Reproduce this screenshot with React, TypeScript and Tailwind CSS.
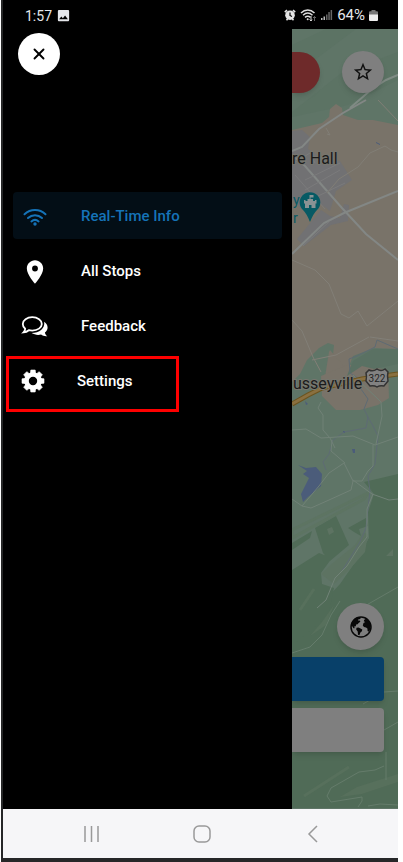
"use client";

import React from 'react';
import { X } from 'lucide-react';
import { MdImage, MdLocationOn, MdStarBorder } from 'react-icons/md';

function WifiIcon() {
  return (
    <svg viewBox="0 0 24 18" width={24} height={18} fill="none" stroke="currentColor" strokeWidth="2" strokeLinecap="round">
      <path d="M1.500 6.200c6-5.600 15-5.600 21 0M5 10c4-3.800 10-3.800 14 0M8.400 13.400c2.200-1.900 5-1.900 7.200 0" />
      <circle cx="12" cy="16" r="1.700" fill="currentColor" stroke="none" />
    </svg>
  );
}

function FeedbackIcon() {
  return (
    <svg viewBox="0 0 28 24" width={28} height={24}>
      <path d="M23.200 6.800c2 1.400 3.400 3.400 3.400 5.700 0 2-1 3.700-2.700 5 .2 1.600 1 2.700 2.400 3.700-2.500.3-4.700-.4-6.200-1.600-3.400.7-6.700.2-9.500-1.500 7.700 0 13.500-4.500 12.600-11.300z" fill="#fff" />
      <path d="M11.300 2.200c5.300 0 9.500 3 9.500 6.700s-4.200 6.700-9.500 6.700c-1.300 0-2.400-.1-3.500-.4-1.500 1.300-3.200 2-5.300 2.200 1-1 1.600-2.200 1.700-3.600-1.500-1.200-2.400-3-2.400-4.900 0-3.700 4.200-6.700 9.500-6.700z" fill="#000" stroke="#fff" strokeWidth="1.800" />
    </svg>
  );
}

function GearIcon() {
  const teeth = [0, 45, 90, 135, 180, 225, 270, 315];

  return (
    <svg viewBox="0 0 24 24" width={24} height={24}>
      <circle cx="12" cy="12" r="6.500" fill="none" stroke="#fff" strokeWidth="4.600" />
      {teeth.map((angle) => (
        <path key={angle} d="M9.300 5l.5-4h4.400l.5 4z" fill="#fff" stroke="#fff" strokeWidth=".6" strokeLinejoin="round" transform={`rotate(${angle} 12 12)`} />
      ))}
    </svg>
  );
}

function AlarmIcon() {
  return (
    <svg viewBox="0 0 12 12" width={12} height={12}>
      <path d="M.8 3.200L3 1.200M11.200 3.200L9 1.200M2.500 11.200l1.500-1.700M9.500 11.200L8 9.500" stroke="#e5e5e5" strokeWidth="1.600" />
      <circle cx="6" cy="6.200" r="4.800" fill="#e5e5e5" />
      <path d="M6 3.500v3l2 1" fill="none" stroke="#000" strokeWidth="1.200" />
    </svg>
  );
}

function WifiStatusIcon() {
  return (
    <svg viewBox="0 0 17 14" width={17} height={14} fill="none" stroke="#ddd" strokeWidth="1.500">
      <path d="M1 5c4-4 9.500-4 13.500 0M3 7.300c3-2.800 6.500-2.800 9.500 0M5 9.400c2-1.600 3.500-1.600 5.500 0" />
      <circle cx="7.700" cy="11.200" r="1" fill="#ddd" stroke="none" />
      <path d="M11 8v5M9.500 11.500l1.500 1.500 1-1.500" strokeWidth="1" />
      <path d="M14.500 13V8.500M13 10l1.500-1.500L16 10" stroke="#666" strokeWidth="1" />
    </svg>
  );
}

function SignalIcon() {
  return (
    <svg viewBox="0 0 12 12" width={12} height={12}>
      <path d="M0 9h1.500v2H0zM2.500 7.500H4V11H2.500z" fill="#bbb" />
      <path d="M5 5.500h1.500V11H5zM7.300 3h1.500v8H7.300zM9.600 1h1.500v10H9.600z" fill="#666" />
    </svg>
  );
}

function BatteryIcon() {
  return (
    <svg viewBox="0 0 9 11" width={9} height={11}>
      <path d="M2.500 0h4v1.200H8a1 1 0 0 1 1 1V5H0V2.200a1 1 0 0 1 1-1h1.500z" fill="#777" />
      <path d="M0 4.500h9V10a1 1 0 0 1-1 1H1a1 1 0 0 1-1-1z" fill="#eee" />
    </svg>
  );
}

function GlobeIcon() {
  return (
    <svg viewBox="0 0 22 22" width={22} height={22}>
      <circle cx="11" cy="11" r="10" fill="none" stroke="#080808" strokeWidth="1.500" />
      <path d="M1 9c.5-3.500 3-6.500 6-7.500l3-.5 1 1-1.500 1.300-1.500.2.500 1.200 1.500-.2.300 1.200-1.700 1.200-1 1.400-1.500.3-.3 1.600-1.500.2L4 11.200l1.500.8L3.500 12.200 2 10z" fill="#080808" />
      <path d="M6.500 11.800l2-.3 1.500.7 2.300 1.200-.4 1.900-1.500 1.300-1 2.700-1.400-.5-.3-3.400-1.500-1.800z" fill="#080808" />
      <path d="M14.500 2l2.500.8 2.500 3 1.300 4-.6 3.700-1.200 2.300-1.400-.8-.2-2.500-1.400-1-2-.4-1.200-1.600.7-2.500 1.800-1-1.500-.8.400-1.500 1.200-.5z" fill="#080808" />
    </svg>
  );
}

function CountyMap() {
  return (
    <svg className="absolute inset-0 h-full w-full" viewBox="292 29 106 780" preserveAspectRatio="xMinYMin slice" fontFamily="Roboto, sans-serif">
      <rect x="292" y="29" width="300" height="900" fill="#5f7567" />
      <path d="M292 45l34-16h30l-64 48zM292 112l48-38 58-22v28l-50 25-56 12z" fill="#5a7163" opacity=".6" />

      {/* built-up land */}
      <path d="M292 130l30-7 7-6 1-8 6-5 6 4 1 7 15 5h15l25 5v224l-24-1-21 8-5 13-12 10-9-9 6-15 1-10-6-2-9 5-12 12-7 14-8 8z" fill="#797369" />
      <path d="M330 350l17 20-13 12-9-5 4-25z" fill="#797369" />
      <path d="M321 376l26-11h15l26 5 1 28-11 7-18 5h-24l-14-14z" fill="#797369" />
      <path d="M292 131l10-1 8 7-2 12 17 11 15 1 12 19-16 11-6 20-13-10-14 9-11-10z" fill="#717173" />
      <path d="M321 210l9 6 10 2 4-14 5 1-1 16-17 4-18 14-9 7-7-7z" fill="#717173" />

      {/* woods */}
      <path d="M398 474l-34 8 10 12-6 18 1 26-13 23-16 23-13 14-9 21-26 14v175h406V474z" fill="#506b57" />
      <path d="M292 543l20-12-2 7-18 12zM315 528l21-12 13 29-19 16-7-8zM292 570l27-17 13 5-11 15 1 11 12 4-6 28-36 30zM348 528l18-10 2 8-9 3 2 7-7-4z" fill="#506b57" />
      <path d="M321 574l13-12 21-17 8-12 5 1-3 18-17 19-14 13z" fill="#5d7362" />
      <path d="M327 529l5-2 2 5-5 3zM386 556l7-7v7z" fill="#5d7362" />
      <path d="M292 530l76-37-4 6-72 39zM300 610l14-21M296 700l30-32M304 796l45-29M345 700l20-14" fill="none" stroke="#5b735f" strokeWidth="3" opacity=".6" />
      <path d="M340 797l17-10 41-13v8l-36 12zM310 636l12-14 12-17-8 20z" fill="#5c735f" opacity=".6" />

      {/* water */}
      <path d="M298 465l8 3 10-1 6 7-1 12-8 7-5 4-5 5-2-8 5-10 3-6-6-4 4-3z" fill="#4b5c7a" />
      <path d="M376 142l4 2v1l-4-2zM305 401l3 3-2 1zM352 449h3v4h-2zM343 431h2v2h-2z" fill="#4b5c7a" />
      <path d="M347 376l3-8 3-7 20-12h25v15l-24 5-12-3z" fill="#5a7163" />
      <path d="M398 349l-21-9-2 7-18 9-8 3 1 14 9 6 2 10 7 10-4 10 4 8-2 11-22 4-11 8-4 14-6 8 3 8M367 416l5 8 6 12-3 28-7 12 2 15-2 17-2 20-6 14-18 29" fill="none" stroke="#5e6b74" strokeWidth="1" />

      {/* roads */}
      <g fill="none" stroke="#838785">
        <path d="M366 100l-23 13-24 16-17 18-10 4M292 155l13 11 37 42 24 26 32 26M292 254l32-31 20-10 54-22" strokeWidth="2" />
        <path d="M292 164l18-11 5 10M295 175l30 34M305 180l35-17M305 190l35-20M314 198l31-15M303 246l27-25" stroke="#7b7b7c" strokeWidth="1" />
        <path d="M326 128l4 7-3-1M398 152l-7-2-6-4-15 7-12 14-19 12-12 14M378 100l20 21" stroke="#817e76" strokeWidth="1" />
        <path d="M292 260l23 10 14 14 12 30 8 4 9-7 9 15 31-25M370 337l28 4M369 337l-33 18-24 5M292 320l10 11 11 26 8 15" stroke="#827f77" strokeWidth="1" />
        <path d="M321 402l-3 6 5 7v15l7 8 5 10M292 430l14-1 15 9 32-2 22 9 23-8M353 375l28 27 1 14-6 28" stroke="#718277" strokeWidth="1" />
        <path d="M292 499l10 7 17-20 10-13 15-10 9 18h9l6-10 5-5V445M302 506l9 2 18-8 22-10 2-9M353 480l19 14 17 6 9-1M373 494l-6 15v28l-8 10-12 19-12 12-9 22-9 8M345 463l-14-12 1-11" stroke="#718277" strokeWidth="1" />
        <path d="M292 653l18-6 12-12 9-20 9-14M350 615l20-12 28-16M363 704l21-12 14-1M384 730l14-8M386 752v28M384 766l-9 4-16 2-28 16-4 8 4 6 31-5v4l-4 6M368 806l12-2 18 1" stroke="#657c6b" strokeWidth="1" />
        <path d="M350 108l22-19 14-9 14-6" stroke="#7f8b84" strokeWidth="2" />
      </g>
      <path d="M292 404l16-9 14-7 40-9 36-5" fill="none" stroke="#6c541f" strokeWidth="5" />
      <path d="M292 404l16-9 14-7 40-9 36-5" fill="none" stroke="#8a7040" strokeWidth="3" />

      {/* route shield */}
      <path d="M369 370q4 2 8-1 4 3 8 0l3 3q-1 4 0 9l-4 5q-4-1-7 1-3-2-7-1l-4-5q1-5 0-8z" fill="#828282" stroke="#333" strokeWidth="1.500" />
      <text x="377" y="382" fontSize="10" textAnchor="middle" fill="#222">322</text>

      {/* places */}
      <path d="M310 222q-3-8-7-12a10.300 10.300 0 1 1 14 0q-4 4-7 12z" fill="#075a64" />
      <path d="M309.500 195h4v2.500h-3v1.500h2.500v2h2v-1h1.500v3.500h-1V208h-4v-3h-2.500v3h-4v-4.500h-1V200h1.500v1h2v-2h2z" fill="#8a9294" />
      <g fill="#1b1b1b" stroke="#77776f" strokeWidth="2" paintOrder="stroke" fontSize="16">
        <text x="292" y="164">re Hall</text>
        <text x="293" y="389">usseyville</text>
        <text x="293" y="205" fontSize="14" fill="#075a64" stroke="none">y</text>
        <text x="293" y="223" fontSize="14" fill="#075a64" stroke="none">r</text>
      </g>
    </svg>
  );
}

export default function App() {
  const menuItems = [
    { label: 'Real-Time Info', icon: <WifiIcon />, active: true },
    { label: 'All Stops', icon: <MdLocationOn size={28} /> },
    { label: 'Feedback', icon: <FeedbackIcon /> },
  ];

  return (
    <div className="min-h-screen bg-white pl-px pr-[5px] font-['Roboto',sans-serif]">
      <div className="flex min-h-screen flex-col border-b-4 border-l-2 border-[#262728] bg-black">
        <header className="flex h-[29px] items-center justify-between pl-[22px] pr-5 pt-0.5 text-sm text-gray-200">
          <div className="flex items-center gap-1">
            <span>1:57</span>
            <MdImage size={15} />
          </div>
          <div className="flex items-center gap-1">
            <AlarmIcon />
            <WifiStatusIcon />
            <SignalIcon />
            <span className="text-[15px]">64%</span>
            <BatteryIcon />
          </div>
        </header>

        <main className="flex flex-1">
          <aside className="w-[289px] shrink-0 bg-black text-white">
            <button aria-label="Close menu" className="ml-[15px] mt-1 flex size-[42px] items-center justify-center rounded-full bg-white text-black">
              <X size={18} strokeWidth={2.500} />
            </button>

            <nav className="mt-[117px] flex flex-col gap-2 px-2.5 text-[15px] font-medium">
              {menuItems.map((item) => (
                <a
                  key={item.label}
                  href="#"
                  className={item.active
                    ? 'flex h-[47px] items-center rounded bg-[#030e16] pl-2 pt-0.5 text-[#1573b8]'
                    : 'flex h-[47px] items-center rounded pl-2 pt-0.5'}
                >
                  <span className="flex w-7 justify-center">{item.icon}</span>
                  <span className="ml-8">{item.label}</span>
                </a>
              ))}
            </nav>
            <a href="#" className="ml-[3px] mt-[7px] flex h-14 w-[173px] items-center border-3 border-[#fe0000] pb-1.5 pl-3 text-[15px] font-medium">
              <GearIcon />
              <span className="ml-8">Settings</span>
            </a>
          </aside>

          <section className="relative flex flex-1 flex-col overflow-hidden">
            <CountyMap />
            <div className="relative mr-3.5 mt-[22px] flex items-center justify-between">
              <button aria-label="Alerts" className="h-[41px] w-7 rounded-r-full bg-[#6e2a2a] shadow-md" />
              <button aria-label="Favorites" className="flex size-[42px] items-center justify-center rounded-full bg-[#7f7f7f] text-[#111] shadow-md">
                <MdStarBorder size={22} />
              </button>
            </div>
            <div className="relative mb-[57px] mr-3.5 mt-auto flex flex-col items-end">
              <button aria-label="Map type" className="mb-[7px] flex size-[47px] items-center justify-center rounded-full bg-[#7f7f7f] shadow-md">
                <GlobeIcon />
              </button>
              <button aria-label="Select route" className="mb-[7px] h-11 w-full rounded-r bg-[#084069] shadow-md" />
              <button aria-label="Search" className="h-11 w-full rounded-r bg-[#7f7f7f] shadow-md" />
            </div>
          </section>
        </main>

        <footer className="grid h-[49px] grid-cols-3 items-center bg-[#f6f6f8] pl-[34px] pr-[30px] text-[#999]">
          <button aria-label="Recent apps" className="flex justify-center">
            <svg viewBox="0 0 18 18" width={18} height={18} stroke="currentColor" strokeWidth="1.500">
              <path d="M2 1v16M8.500 1v16M15 1v16" />
            </svg>
          </button>
          <button aria-label="Home" className="flex justify-center">
            <svg viewBox="0 0 18 18" width={18} height={18} fill="none" stroke="currentColor" strokeWidth="1.500">
              <rect x="1" y="1" width="16" height="16" rx="5" />
            </svg>
          </button>
          <button aria-label="Back" className="flex justify-center">
            <svg viewBox="0 0 12 18" width={12} height={18} fill="none" stroke="currentColor" strokeWidth="1.500">
              <path d="M10 1L2 9l8 8" />
            </svg>
          </button>
        </footer>
      </div>
    </div>
  );
}
